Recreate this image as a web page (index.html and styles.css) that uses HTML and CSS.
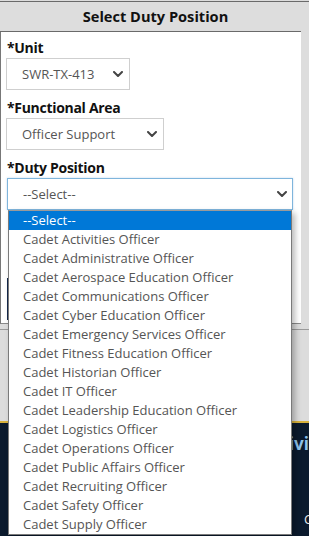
FILE: index.html
```html
<!DOCTYPE html>
<html lang="en">
<head>
<meta charset="utf-8">
<title>Select Duty Position</title>
<link rel="stylesheet" href="styles.css">
</head>
<body>
<div class="screen">
  <div class="dialog">
    <header class="title">Select Duty Position</header>
    <div class="dialog-row">
      <div class="panel">
        <div class="field">
          <label class="label">*Unit</label>
          <div class="select select-unit"><span class="value">SWR-TX-413</span><svg class="chev" viewBox="0 0 10 6" width="10" height="6"><polyline points="1,1 5,5 9,1"/></svg></div>
        </div>
        <div class="field">
          <label class="label">*Functional Area</label>
          <div class="select select-area"><span class="value">Officer Support</span><svg class="chev" viewBox="0 0 10 6" width="10" height="6"><polyline points="1,1 5,5 9,1"/></svg></div>
        </div>
        <div class="field">
          <label class="label">*Duty Position</label>
          <div class="select select-duty"><span class="value">--Select--</span><svg class="chev" viewBox="0 0 10 6" width="10" height="6"><polyline points="1,1 5,5 9,1"/></svg></div>
        </div>
        <div class="btn-row"><div class="btn" aria-hidden="true"></div></div>
      </div>
      <div class="gutter"></div>
    </div>
  </div>
  <div class="band"></div>
  <footer class="footer">
    <div class="brand">Civil Air Patrol</div>
    <div class="copy">Copyright</div>
  </footer>

  <ul class="listbox">
    <li class="opt selected">--Select--</li>
    <li class="opt">Cadet Activities Officer</li>
    <li class="opt">Cadet Administrative Officer</li>
    <li class="opt">Cadet Aerospace Education Officer</li>
    <li class="opt">Cadet Communications Officer</li>
    <li class="opt">Cadet Cyber Education Officer</li>
    <li class="opt">Cadet Emergency Services Officer</li>
    <li class="opt">Cadet Fitness Education Officer</li>
    <li class="opt">Cadet Historian Officer</li>
    <li class="opt">Cadet IT Officer</li>
    <li class="opt">Cadet Leadership Education Officer</li>
    <li class="opt">Cadet Logistics Officer</li>
    <li class="opt">Cadet Operations Officer</li>
    <li class="opt">Cadet Public Affairs Officer</li>
    <li class="opt">Cadet Recruiting Officer</li>
    <li class="opt">Cadet Safety Officer</li>
    <li class="opt">Cadet Supply Officer</li>
  </ul>
</div>
</body>
</html>
```
FILE: styles.css
```css
* { box-sizing: border-box; }
html, body { margin: 0; padding: 0; }
body {
  background: #dcdcdc;
  font-family: "Open Sans", "Liberation Sans", sans-serif;
  color: #111;
}
.screen {
  position: relative;
  width: 309px;
  height: 536px;
  overflow: hidden;
  display: flex;
  flex-direction: column;
}
.dialog {
  margin-top: 1px;
  border-top: 1px solid #6a6a6a;
  background: #dddddd;
}
.title {
  height: 30px;
  line-height: 29px;
  text-align: center;
  padding-left: 2px;
  font-size: 14.6px;
  font-weight: 700;
  color: #111;
  background: linear-gradient(#6a6a6a, #6a6a6a) 0 100% / 301px 1px no-repeat, #dddddd;
}
.dialog-row {
  display: flex;
}
.panel {
  width: 301px;
  height: 292px;
  background: #fff;
  border-left: 1px solid #777;
  border-bottom: 1px solid #8a8a8a;
  padding: 6px 0 0 5px;
}
.gutter {
  flex: 1;
  background: #dddddd;
}
.field {
  margin-bottom: 8px;
}
.label {
  display: block;
  height: 20px;
  line-height: 20px;
  font-size: 14px;
  letter-spacing: -0.3px;
  font-weight: 700;
  color: #111;
  padding-left: 1px;
}
.select {
  height: 32px;
  border: 1px solid #cfcfcf;
  background: #fff;
  display: flex;
  align-items: center;
  justify-content: space-between;
  padding: 0 6px 0 15px;
  font-size: 13px;
  color: #555;
}
.select-unit { width: 124px; }
.select-area { width: 158px; }
.select-duty {
  width: 286px;
  margin-left: 1px;
  border-color: #7fb5dc;
  box-shadow: 0 0 2px rgba(80, 150, 210, 0.35);
  padding-right: 5px;
}
.chev {
  fill: none;
  stroke: #444;
  stroke-width: 2;
  stroke-linecap: round;
  stroke-linejoin: round;
}
.btn-row {
  padding-top: 60px;
}
.btn {
  width: 90px;
  height: 42px;
  margin-left: 1px;
  background: #14284b;
}
.band {
  height: 92px;
  border-top: 1px solid #9a9a9a;
  margin-top: 5px;
  background: #dcdcdc;
}
.footer {
  flex: 1;
  border-top: 2px solid #d8b23c;
  background: #0b1a2d;
  padding: 10px 0 0 278px;
  white-space: nowrap;
}
.brand {
  font-size: 17px;
  font-weight: 700;
  color: #8fc2ea;
  line-height: 22px;
}
.copy {
  margin-top: 55px;
  padding-left: 26px;
  font-size: 13px;
  color: #e8e8e8;
}
.listbox {
  position: absolute;
  left: 8px;
  top: 210px;
  width: 284px;
  margin: 0;
  padding: 0;
  list-style: none;
  background: #fff;
  border: 1px solid #7a7a7a;
  border-top-color: #9a9a9a;
  box-shadow: 3px 3px 6px rgba(0, 0, 0, 0.28);
}
.opt {
  height: 19px;
  line-height: 19px;
  padding-left: 14px;
  font-size: 13px;
  color: #555;
  white-space: nowrap;
}
.opt.selected {
  background: #0078d7;
  color: #fff;
}
```
